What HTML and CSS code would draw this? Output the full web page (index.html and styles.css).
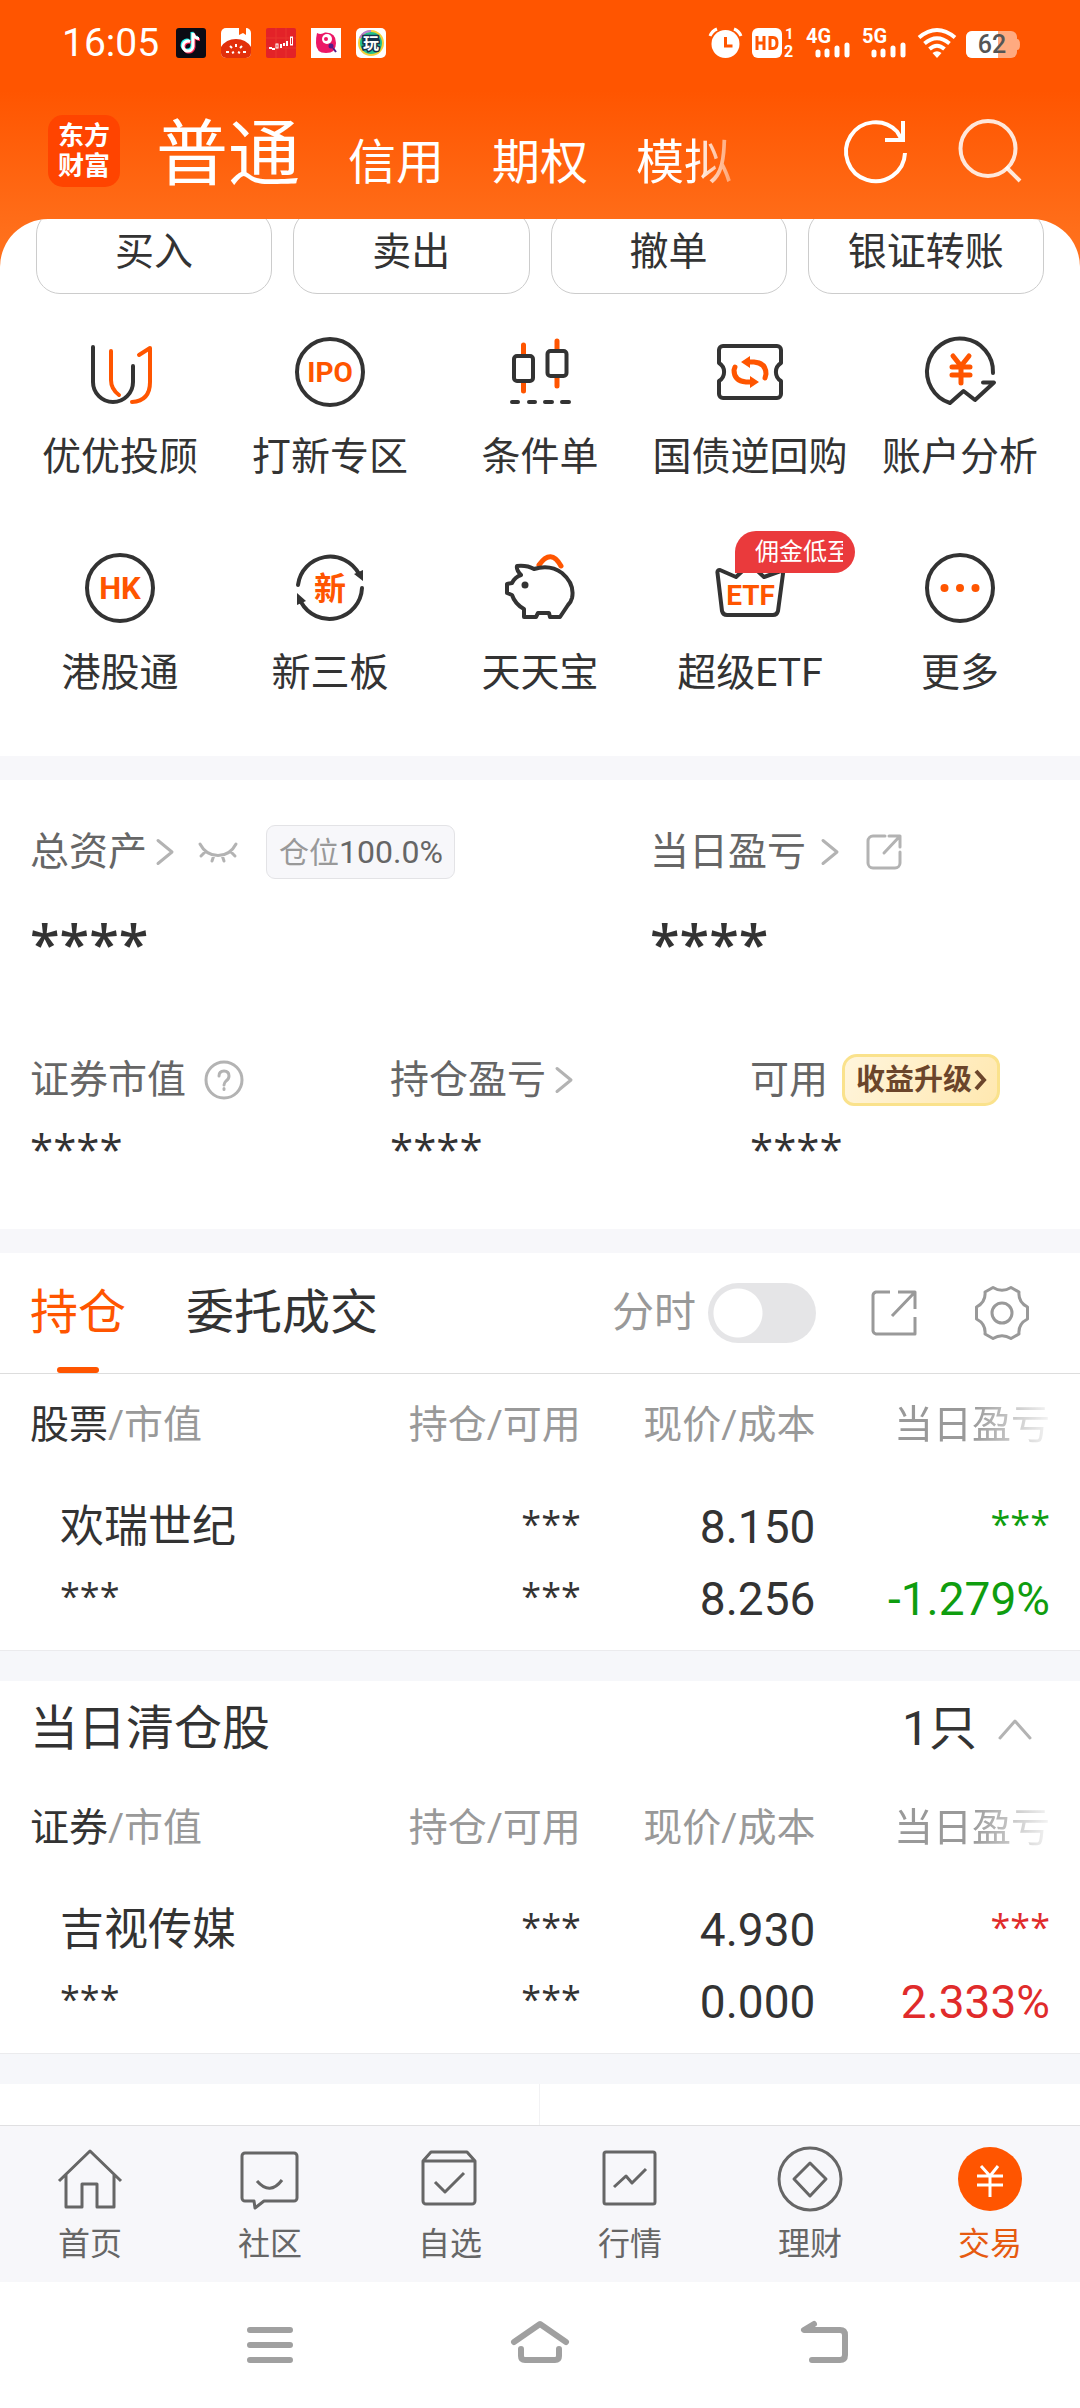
FILE: index.html
```html
<!DOCTYPE html>
<html lang="zh-CN">
<head>
<meta charset="utf-8">
<meta name="viewport" content="width=device-width, initial-scale=1">
<title>东方财富 - 交易</title>
<link rel="stylesheet" href="styles.css">
</head>
<body>
<div class="status-bar">
  <div class="status-left">
    <span class="clock">16:05</span>
    <svg class="app-icon" viewBox="0 0 30 30"><rect width="30" height="30" rx="3" fill="#0c0b14"/><g fill="none" stroke-width="3"><path d="M14 13.500a5 5 0 1 0 3 5V5c1 4 3 5.500 6 5.500" stroke="#25f4ee" transform="translate(-1 -1)"/><path d="M14 13.500a5 5 0 1 0 3 5V5c1 4 3 5.500 6 5.500" stroke="#fe2c55" transform="translate(1 1)"/><path d="M14 13.500a5 5 0 1 0 3 5V5c1 4 3 5.500 6 5.500" stroke="#fff"/></g></svg>
    <svg class="app-icon" viewBox="0 0 30 30"><rect width="30" height="30" rx="5" fill="#fff"/><path d="M0 19Q5 11 15 11T30 19V25a5 5 0 0 1-5 5H5a5 5 0 0 1-5-5z" fill="#e2300c"/><path d="M18 0h7v7l-3-2-4 2z" fill="#ff5500"/><g stroke="#fff" stroke-width="2"><path d="M15 16v3M9 18l2 2M21 18l-2 2M5 24h3M22 24h3M11 25l2-1M19 25l-2-1"/></g></svg>
    <svg class="app-icon" viewBox="0 0 30 30"><rect width="30" height="30" rx="2" fill="#e32228"/><path d="M10 0V30M20 0V30M0 10H30M0 20H30" stroke="#e8352f" stroke-width="1"/><g fill="none" stroke="#fff"><path d="M3 20h3M6 21h3" stroke-width="2"/><rect x="10" y="16" width="2" height="4"/><path d="M15 16v4M18 15v3M21 13v5" stroke-width="2"/><rect x="24.500" y="9" width="2" height="8"/></g></svg>
    <svg class="app-icon" viewBox="0 0 30 30"><rect width="30" height="30" fill="#fff"/><path d="M6 5q4 2 8-.5Q25 4 25 15q0 10-10 10T5 15q0-6 1-10z" fill="#ec1766"/><circle cx="16" cy="11" r="5" fill="#fff"/><circle cx="15" cy="11" r="2" fill="#ec1766"/><circle cx="20" cy="18" r="2.500" fill="#531a86"/><path d="M22 20l3 4" stroke="#531a86" stroke-width="2"/></svg>
    <svg class="app-icon" viewBox="0 0 30 30"><rect width="30" height="30" rx="5" fill="#fff"/><circle cx="15" cy="15" r="12" fill="#1fc08d" stroke="#f3d13b" stroke-width="2"/><path d="M4 10A12 12 0 0 1 15 3" fill="none" stroke="#b57edc" stroke-width="2"/><text x="15" y="21" text-anchor="middle" font-size="16" font-weight="700" fill="#fff" stroke="#16324a" stroke-width="3" paint-order="stroke">玩</text></svg>
  </div>
  <div class="status-right">
    <svg class="status-alarm" viewBox="0 0 33 30"><circle cx="16.500" cy="16" r="14" fill="#fff"/><path d="M1 8Q3 3 8 1M32 8Q30 3 25 1" fill="none" stroke="#fff" stroke-width="3"/><path d="M16.500 9v9h7" fill="none" stroke="#f50" stroke-width="3"/></svg>
    <svg class="status-hd" viewBox="0 0 44 30"><rect width="30" height="30" rx="6" fill="#fff"/><path d="M5 8v14M12 8v14M5 15h7M18 9.500h3q4 0 4 5.500t-4 5.500h-3z" fill="none" stroke="#f50" stroke-width="3"/><text x="33" y="11" font-size="15" font-weight="700" fill="#fff">1</text><text x="32" y="29" font-size="16" font-weight="700" fill="#fff">2</text></svg>
    <svg class="status-signal" viewBox="0 0 46 30"><text x="0" y="15" font-size="20" font-weight="700" fill="#fff">4G</text><g stroke="#fff" stroke-width="5" stroke-linecap="round"><path d="M12 24v3M21 23v4M31 20v7M41 17v10"/></g></svg>
    <svg class="status-signal" viewBox="0 0 46 30"><text x="0" y="15" font-size="20" font-weight="700" fill="#fff">5G</text><g stroke="#fff" stroke-width="5" stroke-linecap="round"><path d="M12 24v3M21 23v4M31 20v7M41 17v10"/></g></svg>
    <svg class="status-wifi" viewBox="0 0 38 30"><g fill="none" stroke="#fff" stroke-width="4"><path d="M1 9.500Q19-5.500 37 9.500M6.500 15.500Q19 5 31.500 15.500M11.500 21Q19 14.500 26.500 21"/></g><path d="M19 30l-4.500-5q4.500-3.500 9 0z" fill="#fff"/></svg>
    <svg class="status-battery" viewBox="0 0 54 30"><rect y="3" width="51" height="27" rx="6" fill="#ffaa80"/><path d="M51 11q3 0 3 5.500T51 22z" fill="#ffaa80"/><path d="M32 3H6a6 6 0 0 0-6 6V24a6 6 0 0 0 6 6H32z" fill="#fff"/><text x="26" y="25" text-anchor="middle" font-size="25" font-weight="500" fill="#555">62</text></svg>
  </div>
</div>

<header class="app-header">
  <a class="brand" href="#"><span>东方</span><span>财富</span></a>
  <nav class="account-tabs">
    <a class="account-tab account-tab-active" href="#">普通</a>
    <a class="account-tab" href="#">信用</a>
    <a class="account-tab" href="#">期权</a>
    <a class="account-tab" href="#">模拟</a>
  </nav>
  <button class="icon-button" type="button" aria-label="刷新"><svg class="header-icon" viewBox="0 0 66 66" fill="none" stroke="#fff" stroke-width="4"><path d="M62 35A29.500 29.500 0 1 1 54 13.500L59 22"/><path d="M60 3V22H42"/></svg></button>
  <button class="icon-button" type="button" aria-label="搜索"><svg class="header-icon" viewBox="0 0 66 66" fill="none" stroke="#fff" stroke-opacity=".85" stroke-width="4"><circle cx="31" cy="30.500" r="27.500"/><path d="M49 49L63 63"/></svg></button>
</header>

<main class="panel">
  <section class="trade-actions">
    <button class="trade-button" type="button">买入</button>
    <button class="trade-button" type="button">卖出</button>
    <button class="trade-button" type="button">撤单</button>
    <button class="trade-button" type="button">银证转账</button>
  </section>

  <nav class="shortcuts">
    <a class="shortcut" href="#"><svg class="shortcut-icon" viewBox="0 0 72 72"><path d="M9 11V46a20 20 0 0 0 40 0V30"/><path class="accent" d="M27 15V44q0 9 8 15M48 66q18-1 18-20V12l-11 7"/></svg><span>优优投顾</span></a>
    <a class="shortcut" href="#"><svg class="shortcut-icon" viewBox="0 0 72 72"><circle cx="36" cy="36" r="33"/><text x="36" y="46" font-size="28">IPO</text></svg><span>打新专区</span></a>
    <a class="shortcut" href="#"><svg class="shortcut-icon" viewBox="0 0 72 72"><path class="accent-wide" d="M19.500 9V55M53 5V50"/><rect class="filled" x="10" y="20" width="19" height="25" rx="3"/><rect class="filled" x="43.500" y="15" width="19" height="25" rx="3"/><path d="M8 66h6M25 66h6M41 66h7M58 66h7"/></svg><span>条件单</span></a>
    <a class="shortcut" href="#"><svg class="shortcut-icon" viewBox="0 0 72 72"><path d="M9 10H63a4 4 0 0 1 4 4V27a10.500 10.500 0 0 0 0 18V58a4 4 0 0 1-4 4H9a4 4 0 0 1-4-4V45a10.500 10.500 0 0 0 0-18V14a4 4 0 0 1 4-4z"/><path class="accent-wide" d="M34 26h6q12 1 12 12l-1 4M38 46h-6Q20 45 20 34l1-3"/><path class="accent-fill" d="M27 26l9-6v12zM45 46l-9-6v12z"/></svg><span>国债逆回购</span></a>
    <a class="shortcut" href="#"><svg class="shortcut-icon" viewBox="0 0 72 72"><path d="M69 37A33 33 0 1 0 26 67L39.500 55 51 64 70 46.500H59"/><path class="accent-wide" d="M29 20l8 10 8-10M28 31h18M28 39h18M37 31V47"/></svg><span>账户分析</span></a>
    <a class="shortcut" href="#"><svg class="shortcut-icon" viewBox="0 0 72 72"><circle cx="36" cy="36" r="33"/><text x="36" y="47" font-size="31">HK</text></svg><span>港股通</span></a>
    <a class="shortcut" href="#"><svg class="shortcut-icon" viewBox="0 0 72 72"><path d="M4 33A32.500 32.500 0 0 1 65 22M68 36A32.500 32.500 0 0 1 7 50"/><path class="dark-fill" d="M60 22l9-4v11zM12 49l-9 4V41z"/><text x="36" y="48" font-size="32">新</text></svg><span>新三板</span></a>
    <a class="shortcut" href="#"><svg class="shortcut-icon" viewBox="0 0 72 72"><path class="accent-wide" d="M35 13Q47-4 57 14"/><path class="filled" d="M13 14q10-1 17 3 16-5 28 4 13 11 10 25-1 4-4 7l-8 12H46l-1-4H34l-2 4H20V57q-9-5-12-14l-5-2V32l5-1q3-6 9-8-5-5-4-9z"/><circle class="dark-fill" cx="21" cy="33" r="3.500"/></svg><span>天天宝</span></a>
    <a class="shortcut" href="#"><svg class="shortcut-icon" viewBox="0 0 72 72"><path d="M22 25L6 18q-3 0-2.500 3L8 59q1 4 5 4H59q4 0 5-4l5.500-41L50 25 36 12z"/><text x="36.500" y="53" font-size="28">ETF</text></svg><span>超级ETF</span><span class="promo-badge"><span class="promo-text">佣金低至</span></span></a>
    <a class="shortcut" href="#"><svg class="shortcut-icon" viewBox="0 0 72 72"><circle cx="36" cy="36" r="33"/><g class="accent-fill"><circle cx="20.500" cy="36" r="4"/><circle cx="36" cy="36" r="4"/><circle cx="51.500" cy="36" r="4"/></g></svg><span>更多</span></a>
  </nav>

  <section class="assets">
    <div class="assets-main">
      <div class="asset">
        <div class="asset-label">
          <a class="asset-link" href="#">总资产<svg class="chevron" viewBox="0 0 18 28"><path d="M2 2.500L16 14 2 25.500"/></svg></a>
          <button class="icon-button" type="button" aria-label="显示金额"><svg class="eye" viewBox="0 0 40 24"><path d="M2 4Q8 15.500 20 15.500T38 4M8 11l-5 5M32 11l5 5M16 15l-2 6M24 15l2 6"/></svg></button>
          <span class="position-tag">仓位<b>100.0%</b></span>
        </div>
        <div class="asset-total">****</div>
      </div>
      <div class="asset">
        <div class="asset-label">
          <a class="asset-link asset-link-wide" href="#">当日盈亏<svg class="chevron" viewBox="0 0 18 28"><path d="M2 2.500L16 14 2 25.500"/></svg></a>
          <button class="icon-button" type="button" aria-label="分享"><svg class="share-small" viewBox="0 0 36 36"><path d="M19 2H7a5 5 0 0 0-5 5V29a5 5 0 0 0 5 5H29a5 5 0 0 0 5-5V18M23 2H34V13M34 2L18 19"/></svg></button>
        </div>
        <div class="asset-total">****</div>
      </div>
    </div>
    <div class="assets-detail">
      <div class="asset">
        <div class="asset-label">证券市值
          <button class="icon-button" type="button" aria-label="说明"><svg class="help" viewBox="0 0 40 40"><circle cx="20" cy="20" r="18"/><path d="M15 16q0-5 5-5t5 5q0 3-3 5-2 2-2 4M20 28.500v1"/></svg></button>
        </div>
        <div class="asset-value">****</div>
      </div>
      <div class="asset">
        <div class="asset-label"><a class="asset-link" href="#">持仓盈亏<svg class="chevron" viewBox="0 0 18 28"><path d="M2 2.500L16 14 2 25.500"/></svg></a></div>
        <div class="asset-value">****</div>
      </div>
      <div class="asset">
        <div class="asset-label asset-label-tight">可用<a class="upgrade" href="#">收益升级<svg class="upgrade-chevron" viewBox="0 0 12 22"><path d="M2 2l8 9-8 9"/></svg></a></div>
        <div class="asset-value">****</div>
      </div>
    </div>
  </section>

  <section class="holdings">
    <div class="toolbar">
      <button class="tab tab-active" type="button">持仓</button>
      <button class="tab" type="button">委托成交</button>
      <label class="minute-toggle">分时<input class="switch" type="checkbox" role="switch"></label>
      <button class="icon-button" type="button" aria-label="分享"><svg class="share-large" viewBox="0 0 48 48"><path d="M20 3H6a4 4 0 0 0-3 3V42a4 4 0 0 0 3 3H45V28M28 3H45V20M45 3L22 27"/></svg></button>
      <button class="icon-button" type="button" aria-label="设置"><svg class="gear" viewBox="0 0 60 60"><circle cx="30" cy="30" r="10"/><path d="M21 4.500Q30 10 39 4.500L47 9Q46 19 55.500 24V36Q46 41 47 51L39 55.500Q30 50 21 55.500L13 51Q14 41 4.500 36V24Q14 19 13 9z"/></svg></button>
    </div>
    <table class="positions">
      <thead>
        <tr><th class="col-name"><strong>股票</strong>/市值</th><th class="col-amount">持仓/可用</th><th>现价/成本</th><th><span class="fade-out">当日盈亏</span></th></tr>
      </thead>
      <tbody>
        <tr>
          <td class="name-cell"><div class="line">欢瑞世纪</div><div class="line masked">***</div></td>
          <td><div class="line masked">***</div><div class="line masked">***</div></td>
          <td><div class="line number">8.150</div><div class="line number">8.256</div></td>
          <td class="down"><div class="line masked">***</div><div class="line number">-1.279%</div></td>
        </tr>
      </tbody>
    </table>
  </section>

  <section class="cleared">
    <div class="cleared-head">
      <h2 class="cleared-title">当日清仓股</h2>
      <button class="cleared-count" type="button">1只<svg class="chevron-up" viewBox="0 0 34 22"><path d="M2 20L17 3 32 20"/></svg></button>
    </div>
    <table class="positions">
      <thead>
        <tr><th class="col-name"><strong>证券</strong>/市值</th><th class="col-amount">持仓/可用</th><th>现价/成本</th><th><span class="fade-out">当日盈亏</span></th></tr>
      </thead>
      <tbody>
        <tr>
          <td class="name-cell"><div class="line">吉视传媒</div><div class="line masked">***</div></td>
          <td><div class="line masked">***</div><div class="line masked">***</div></td>
          <td><div class="line number">4.930</div><div class="line number">0.000</div></td>
          <td class="up"><div class="line masked">***</div><div class="line number">2.333%</div></td>
        </tr>
      </tbody>
    </table>
  </section>

  <section class="more-links"><div class="more-cell"></div><div class="more-cell"></div></section>
</main>

<nav class="bottom-nav">
  <a class="nav-item" href="#"><svg class="nav-icon" viewBox="0 0 66 66"><path d="M2 35L33 5 64 35M9 29V61H25V38H40V61H57V29"/></svg>首页</a>
  <a class="nav-item" href="#"><svg class="nav-icon" viewBox="0 0 66 66"><path d="M8 7H57a3 3 0 0 1 3 3V52a3 3 0 0 1-3 3H27l-9 7-1-7H8a3 3 0 0 1-3-3V10a3 3 0 0 1 3-3zM20 35q13 15 25-1"/></svg>社区</a>
  <a class="nav-item" href="#"><svg class="nav-icon" viewBox="0 0 66 66"><path d="M6 15L14 6H50L58 15V55a3 3 0 0 1-3 3H9a3 3 0 0 1-3-3zH58M18 36L28 46 47 27"/></svg>自选</a>
  <a class="nav-item" href="#"><svg class="nav-icon" viewBox="0 0 66 66"><rect x="7" y="6" width="51" height="52" rx="2"/><path d="M17 41L29 30 35 37 49 23"/></svg>行情</a>
  <a class="nav-item" href="#"><svg class="nav-icon" viewBox="0 0 66 66"><circle cx="33" cy="33" r="31"/><path d="M33 17L49 33 33 50 17 33z"/></svg>理财</a>
  <a class="nav-item nav-item-active" href="#"><svg class="nav-icon" viewBox="0 0 66 66"><circle class="nav-disc" cx="33" cy="33" r="32"/><path d="M24 20L33 30 41 20M20 30H46M20 39H46M33 30V51"/></svg>交易</a>
</nav>

<nav class="system-nav">
  <button class="icon-button" type="button" aria-label="最近任务"><svg class="system-icon" viewBox="0 0 60 48"><path d="M10 9H50M10 24H50M10 39H50"/></svg></button>
  <button class="icon-button" type="button" aria-label="主屏幕"><svg class="system-icon" viewBox="0 0 60 48"><path d="M4 21L30 3 56 21M11 28V35q0 4 4 4H45q4 0 4-4V28"/></svg></button>
  <button class="icon-button" type="button" aria-label="返回"><svg class="system-icon" viewBox="0 0 60 48"><path d="M34 3L24 9H60q5 0 5 5V34q0 5-5 5H32"/></svg></button>
</nav>
</body>
</html>
```
FILE: styles.css
```css
* {
  box-sizing: border-box;
}

body {
  margin: 0;
  min-height: 100vh;
  display: flex;
  flex-direction: column;
  background: linear-gradient(#ff5500 0, #ff5500 90px, #ff701c 240px, #ff701c 300px, #ffffff 300px);
  color: #333333;
  font-family: Roboto, "Noto Sans CJK SC", sans-serif;
  font-size: 39px;
  line-height: 54px;
}

a {
  color: inherit;
  text-decoration: none;
}

button {
  padding: 0;
  border: 0;
  background: none;
  color: inherit;
  font: inherit;
}

svg {
  display: block;
  flex: none;
  overflow: visible;
}

.icon-button {
  display: flex;
}

/* Status bar */

.status-bar {
  display: flex;
  justify-content: space-between;
  align-items: center;
  height: 86px;
  padding: 0 60px 0 62px;
  color: #ffffff;
}

.status-left {
  display: flex;
  align-items: center;
  gap: 15px;
}

.clock {
  margin-right: 2px;
}

.app-icon {
  width: 30px;
  height: 30px;
}

.status-right {
  display: flex;
  align-items: center;
  gap: 10px;
}

.status-alarm {
  width: 33px;
  height: 30px;
}

.status-hd {
  width: 44px;
  height: 30px;
}

.status-signal {
  width: 46px;
  height: 30px;
}

.status-wifi {
  width: 38px;
  height: 30px;
}

.status-battery {
  width: 54px;
  height: 30px;
}

/* App header */

.app-header {
  display: flex;
  align-items: center;
  gap: 48px;
  height: 133px;
  padding: 0 57px 3px 48px;
  color: #ffffff;
}

.brand {
  display: flex;
  flex-direction: column;
  flex: none;
  align-items: center;
  justify-content: center;
  width: 72px;
  height: 72px;
  margin-right: -12px;
  border-radius: 15px;
  background: #ff4400;
  font-size: 26px;
  font-weight: 700;
  line-height: 30px;
}

.account-tabs {
  display: flex;
  flex: 1;
  align-items: baseline;
  gap: 48px;
  padding-top: 16px;
}

.account-tab {
  font-size: 48px;
  line-height: 84px;
}

.account-tab-active {
  font-size: 72px;
}

.account-tab:last-child {
  -webkit-mask-image: linear-gradient(90deg, #000 60%, rgba(0, 0, 0, 0.4));
  mask-image: linear-gradient(90deg, #000 60%, rgba(0, 0, 0, 0.4));
}

.header-icon {
  width: 66px;
  height: 66px;
}

/* White panel */

.panel {
  display: flex;
  flex: 1;
  flex-direction: column;
  overflow: hidden;
  border-radius: 48px 48px 0 0;
  background: #ffffff;
}

/* The row is scrolled slightly under the header */
.trade-actions {
  display: grid;
  grid-template-columns: repeat(4, 1fr);
  gap: 21px;
  margin-top: -9px;
  padding: 0 36px;
}

.trade-button {
  height: 84px;
  border: 1px solid #cccccc;
  border-radius: 24px;
}

.shortcuts {
  display: grid;
  grid-template-columns: repeat(5, 1fr);
  row-gap: 68px;
  padding: 42px 15px 56px;
}

.shortcut {
  position: relative;
  display: flex;
  flex-direction: column;
  align-items: center;
  gap: 22px;
  white-space: nowrap;
}

.shortcut-icon {
  width: 72px;
  height: 72px;
  fill: none;
  stroke: #333333;
  stroke-width: 4;
  stroke-linecap: round;
  stroke-linejoin: round;
}

.shortcut-icon text {
  fill: #ff5500;
  stroke: none;
  font-weight: 700;
  text-anchor: middle;
}

.shortcut-icon .filled {
  fill: #ffffff;
}

.shortcut-icon .accent {
  stroke: #ff5500;
}

.shortcut-icon .accent-wide {
  stroke: #ff5500;
  stroke-width: 5;
}

.shortcut-icon .accent-fill {
  fill: #ff5500;
  stroke: none;
}

.shortcut-icon .dark-fill {
  fill: #333333;
  stroke: none;
}

.promo-badge {
  position: absolute;
  top: -21px;
  left: calc(50% - 15px);
  width: 120px;
  height: 42px;
  padding: 0 12px 0 20px;
  border-radius: 21px 21px 21px 0;
  background: #ea3a3c;
  color: #ffffff;
  font-size: 24px;
  line-height: 42px;
}

.promo-text {
  display: block;
  overflow: hidden;
}

/* Assets */

.assets {
  padding: 45px 30px 52px;
  border-top: 24px solid #f7f7fa;
}

.assets-main {
  display: grid;
  grid-template-columns: 31fr 20fr;
  margin-bottom: 80px;
}

.assets-detail {
  display: grid;
  grid-template-columns: 6fr 6fr 5fr;
}

.asset-label {
  display: flex;
  align-items: center;
  gap: 18px;
  height: 54px;
  color: #666666;
  white-space: nowrap;
}

.asset-label-tight {
  gap: 14px;
}

.asset-link {
  display: flex;
  align-items: center;
  gap: 9px;
}

.asset-link-wide {
  gap: 15px;
  margin-right: 9px;
}

.chevron {
  width: 18px;
  height: 28px;
}

.chevron,
.eye,
.share-small,
.help,
.chevron-up {
  fill: none;
  stroke: #b3b3b3;
  stroke-width: 3;
  stroke-linecap: round;
  stroke-linejoin: round;
}

.eye {
  width: 40px;
  height: 24px;
  margin: 0 10px 0 6px;
}

.share-small {
  width: 36px;
  height: 36px;
}

.help {
  width: 40px;
  height: 40px;
}

.position-tag {
  height: 54px;
  padding: 0 11px 0 12px;
  border: 1px solid #e3e3e6;
  border-radius: 9px;
  background: #f7f7fa;
  color: #999999;
  font-size: 30px;
  line-height: 52px;
}

.position-tag b {
  color: #666666;
  font-size: 32px;
  font-weight: 400;
}

.asset-total,
.asset-value,
.masked {
  font-family: "Open Sans", sans-serif;
}

.asset-total {
  margin-top: 34px;
  font-size: 54px;
  font-weight: 600;
  line-height: 60px;
}

.asset-value {
  margin-top: 18px;
  margin-bottom: 4px;
  font-size: 42px;
  font-weight: 500;
  line-height: 48px;
}

.upgrade {
  display: flex;
  align-items: center;
  gap: 2px;
  height: 52px;
  padding: 0 11px;
  border: 3px solid #fae28c;
  border-radius: 15px 12px 15px 12px;
  background: linear-gradient(120deg, #fff5dc, #ffe8b0);
  color: #6b452b;
  font-size: 29px;
  font-weight: 700;
}

.upgrade-chevron {
  width: 12px;
  height: 22px;
  fill: none;
  stroke: #6b452b;
  stroke-width: 4;
}

/* Holdings */

.holdings {
  border-top: 24px solid #f7f7fa;
}

.toolbar {
  display: flex;
  align-items: center;
  height: 121px;
  padding: 0 48px 0 30px;
  border-bottom: 1px solid #dddddd;
}

.tab {
  position: relative;
  height: 120px;
  margin-right: 60px;
  font-size: 48px;
}

.tab-active {
  color: #ff5500;
}

.tab-active::after {
  content: "";
  position: absolute;
  bottom: 0;
  left: calc(50% - 21px);
  width: 42px;
  height: 6px;
  border-radius: 3px;
  background: #ff5500;
}

.minute-toggle {
  display: flex;
  align-items: center;
  gap: 12px;
  margin-left: auto;
  color: #999999;
  font-size: 42px;
}

.switch {
  width: 108px;
  height: 60px;
  margin: 0;
  border-radius: 30px;
  background: radial-gradient(circle at 30px 50%, #ffffff 24px, #e5e5e7 25px);
  appearance: none;
}

.switch:checked {
  background: radial-gradient(circle at 78px 50%, #ffffff 24px, #ff5500 25px);
}

.share-large,
.gear {
  margin-left: 54px;
  fill: none;
  stroke: #999999;
  stroke-width: 3;
  stroke-linejoin: round;
}

.share-large {
  width: 48px;
  height: 48px;
}

.gear {
  width: 60px;
  height: 60px;
}

.positions {
  width: 100%;
  padding: 0 30px;
  border-bottom: 1px solid #ebebed;
  border-spacing: 0;
  table-layout: fixed;
}

.positions th {
  height: 102px;
  padding: 0;
  color: #999999;
  font-weight: 400;
  text-align: right;
  white-space: nowrap;
}

.positions th.col-name {
  width: 29%;
  text-align: left;
}

.positions th.col-amount {
  width: 25%;
}

.positions strong {
  color: #333333;
  font-weight: 400;
}

.positions td {
  padding: 15px 0;
  text-align: right;
}

.positions .name-cell {
  padding-left: 30px;
  text-align: left;
}

.line {
  height: 72px;
  font-size: 44px;
  line-height: 72px;
}

.number {
  font-size: 46px;
}

.masked {
  font-size: 36px;
  line-height: 66px;
}

.down {
  color: #0f9d0f;
}

.up {
  color: #e02b2b;
}

.fade-out {
  -webkit-mask-image: linear-gradient(90deg, #000 50%, rgba(0, 0, 0, 0.1));
  mask-image: linear-gradient(90deg, #000 50%, rgba(0, 0, 0, 0.1));
}

/* Positions closed today */

.cleared {
  border-top: 30px solid #f6f7fa;
}

.cleared-head {
  display: flex;
  align-items: center;
  justify-content: space-between;
  height: 96px;
  padding: 0 48px 0 30px;
  font-size: 48px;
}

.cleared-title {
  margin: 0;
  font-size: 48px;
  font-weight: 400;
}

.cleared-count {
  display: flex;
  align-items: center;
  gap: 21px;
}

.chevron-up {
  width: 34px;
  height: 22px;
}

.more-links {
  display: grid;
  flex: 1;
  grid-template-columns: 1fr 1fr;
  min-height: 41px;
  border-top: 30px solid #f6f7fa;
}

.more-cell:first-child {
  border-right: 1px solid #f2f2f4;
}

/* Bottom navigation */

.bottom-nav {
  display: grid;
  grid-template-columns: repeat(6, 1fr);
  height: 157px;
  padding-top: 20px;
  border-top: 1px solid #e0e0e2;
  background: #f7f7fa;
}

.nav-item {
  display: flex;
  flex-direction: column;
  align-items: center;
  gap: 10px;
  color: #666666;
  font-size: 32px;
  line-height: 44px;
}

.nav-icon {
  width: 66px;
  height: 66px;
  fill: none;
  stroke: #666666;
  stroke-width: 3;
  stroke-linejoin: round;
}

.nav-item-active {
  color: #e65a10;
}

.nav-item-active .nav-icon {
  stroke: #ffffff;
}

.nav-item-active .nav-disc {
  fill: #ff5500;
  stroke: none;
}

.system-nav {
  display: grid;
  grid-template-columns: repeat(3, 1fr);
  align-items: center;
  justify-items: center;
  height: 126px;
  padding: 0 12.5%;
  background: #ffffff;
}

.system-icon {
  width: 60px;
  height: 48px;
  fill: none;
  stroke: #a0a0a0;
  stroke-width: 6;
  stroke-linecap: round;
  stroke-linejoin: round;
}
```
